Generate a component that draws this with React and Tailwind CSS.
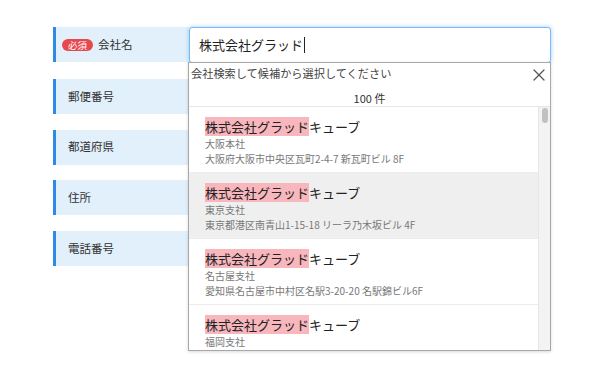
import { X } from 'lucide-react';

const labels = ['会社名', '郵便番号', '都道府県', '住所', '電話番号'];

const results = [
  { branch: '大阪本社', address: '大阪府大阪市中央区瓦町2-4-7 新瓦町ビル 8F' },
  { branch: '東京支社', address: '東京都港区南青山1-15-18 リーラ乃木坂ビル 4F', active: true },
  { branch: '名古屋支社', address: '愛知県名古屋市中村区名駅3-20-20 名駅錦ビル6F' },
  { branch: '福岡支社', address: '福岡県福岡市博多区博多駅前2-1-1 福岡朝日ビル 5F' },
];

function CompanyDropdown() {
  return (
    <div className="absolute left-[-1px] top-[35px] z-10 w-[363px] h-[289px] bg-white border border-[#a8a8a8] flex flex-col shadow-[0_1px_3px_rgba(0,0,0,0.15)]">
      {/* ヘッダー */}
      <div className="relative h-[21px] pl-[2px] text-[11.2px] leading-[21px] text-[#444]">
        会社検索して候補から選択してください
        <button className="absolute right-[1px] top-[2px] text-[#555]">
          <X className="w-[20px] h-[20px]" strokeWidth={1.5} />
        </button>
      </div>
      <div className="h-[22px] pt-[6px] text-center text-[11px] leading-[16px] text-[#333]">100 件</div>

      {/* 候補リスト */}
      <div className="flex-1 flex border-t border-[#e6e6e6] overflow-hidden">
        <div className="flex-1 flex flex-col">
          {results.map((r) => (
            <div
              key={r.branch}
              className={`h-[66px] shrink-0 pl-[16px] pt-[11px] border-b border-[#ececec] ${r.active ? 'bg-[#efefef]' : 'bg-white'}`}
            >
              <div className="text-[13px] leading-[18px] text-[#222]">
                <span className="bg-[#f8b6bd]">株式会社グラッド</span>キューブ
              </div>
              <div className="text-[10px] leading-[15px] text-[#777]">{r.branch}</div>
              <div className="text-[10px] leading-[15px] text-[#777] whitespace-nowrap">{r.address}</div>
            </div>
          ))}
        </div>
        {/* スクロールバー */}
        <div className="w-[12px] bg-[#f3f3f3] border-l border-[#e6e6e6] pt-[1px] flex justify-center">
          <div className="w-[6px] h-[15px] rounded-full bg-[#c1c1c1]"></div>
        </div>
      </div>
    </div>
  );
}

export default function App() {
  return (
    <div
      className="w-[600px] h-[375px] bg-white pl-[53px] pt-[27px] overflow-hidden"
      style={{ fontFamily: '"Noto Sans CJK JP", "Noto Sans", sans-serif' }}
    >
      <div className="flex flex-col gap-[15.75px]">
        {labels.map((label, i) => (
          <div key={label} className="flex">
            <div className="w-[136px] h-[35px] bg-[#e2f0fc] border-l-[3px] border-[#2f8ae6] flex items-center pl-[6px] text-[11.5px] text-[#333]">
              {i === 0 ? (
                <span className="bg-[#e8474c] text-white text-[9.5px] leading-[12px] rounded-full px-[6px] mr-[5px]">必須</span>
              ) : (
                <span className="w-[6px]"></span>
              )}
              {label}
            </div>
            <div className="relative">
              {i === 0 ? (
                <>
                  <div className="w-[362px] h-[36px] border border-[#7db9ef] rounded-[3px] shadow-[0_0_4px_rgba(80,160,235,0.55)] bg-white flex items-center pl-[9px] text-[13px] text-[#222]">
                    株式会社グラッド
                    <span className="inline-block w-[1px] h-[16px] bg-[#222] ml-[1px]"></span>
                  </div>
                  <CompanyDropdown />
                </>
              ) : (
                <div className="w-[362px] h-[35px] border border-[#ccc] rounded-[3px] bg-white"></div>
              )}
            </div>
          </div>
        ))}
      </div>
    </div>
  );
}
